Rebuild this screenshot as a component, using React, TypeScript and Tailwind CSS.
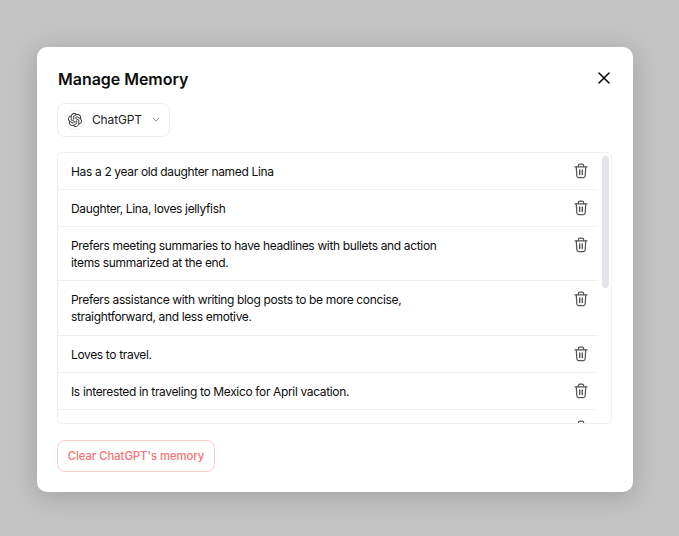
import { SiOpenai } from "react-icons/si";

const memories: { text: string[]; }[] = [
  { text: ["Has a 2 year old daughter named Lina"] },
  { text: ["Daughter, Lina, loves jellyfish"] },
  { text: ["Prefers meeting summaries to have headlines with bullets and action", "items summarized at the end."] },
  { text: ["Prefers assistance with writing blog posts to be more concise,", "straightforward, and less emotive."] },
  { text: ["Loves to travel."] },
  { text: ["Is interested in traveling to Mexico for April vacation."] },
  { text: ["Prefers concise answers."] },
];

function Trash() {
  return (
    <svg width="14" height="16" viewBox="0 0 14 16" fill="none" stroke="#555" strokeWidth="1.25" strokeLinecap="round" strokeLinejoin="round" className="shrink-0">
      <path d="M1 3.8h12" />
      <path d="M4.4 3.6V2.6c0-.9.6-1.4 1.4-1.4h2.4c.8 0 1.4.5 1.4 1.4v1" />
      <path d="M2.3 4l.5 8.8c.1 1.1.7 1.9 1.8 1.9h4.8c1.1 0 1.7-.8 1.8-1.9l.5-8.8" />
      <path d="M5.7 7v4.6M8.3 7v4.6" strokeWidth="1.4" />
    </svg>
  );
}

export default function App() {
  return (
    <div className="w-[679px] h-[536px] bg-[#c3c3c3] flex items-start pt-[47px] pl-[37px] font-['Inter',sans-serif]">
      <div className="w-[596px] h-[445px] bg-white rounded-[10px] shadow-[0_4px_24px_rgba(0,0,0,0.18)] flex flex-col pt-[20px] px-[20px]">
        <div className="flex items-start justify-between h-[24px]">
          <h1 className="pl-[1px] text-[16px] leading-[24px] font-semibold text-[#0d0d0d] tracking-[-0.03px]">Manage Memory</h1>
          <svg width="12" height="12" viewBox="0 0 12 12" fill="none" stroke="#0d0d0d" strokeWidth="1.6" strokeLinecap="round" className="mr-[3px] mt-[5px]">
            <path d="M1 1l10 10M11 1L1 11" />
          </svg>
        </div>
        <div className="mt-[12px] w-[113px] h-[34px] rounded-[8px] border border-[#ececec] flex items-center pl-[7px]">
          <span className="w-[20px] h-[20px] rounded-full border border-[#eeeeee] flex items-center justify-center">
            <SiOpenai className="w-[14px] h-[14px] text-[#333]" />
          </span>
          <span className="ml-[7px] text-[12px] tracking-[-0.15px] leading-none text-[#222]">ChatGPT</span>
          <svg width="8" height="6" viewBox="0 0 8 6" fill="none" stroke="#8a8a8a" strokeWidth="1" strokeLinecap="round" strokeLinejoin="round" className="ml-[10px]">
            <path d="M1 1.2l3 3 3-3" />
          </svg>
        </div>
        <div className="relative mt-[15px] w-[555px] h-[272px] rounded-[6px] border border-[#f0f0f0] overflow-hidden pr-[13px]">
          {memories.map((m, i) => (
            <div key={i} className="flex justify-between pl-[13px] pr-[10px] pt-[10px] pb-[9.15px] border-b border-[#f0f0f0]">
              <p className="text-[12px] tracking-[-0.35px] leading-[17px] text-[#0d0d0d]">
                {m.text.map((line) => (
                  <span key={line} className="block">{line}</span>
                ))}
              </p>
              <Trash />
            </div>
          ))}
          <div className="absolute right-[2px] top-[3px] w-[7px] h-[132px] rounded-full bg-[#e3e3e8]" />
        </div>
        <button className="mt-[16px] w-[158px] h-[32px] rounded-[8px] border border-[#ffc9c9] text-[11.25px] font-medium text-[#f87171] flex items-center justify-center">
          Clear ChatGPT's memory
        </button>
      </div>
    </div>
  );
}
